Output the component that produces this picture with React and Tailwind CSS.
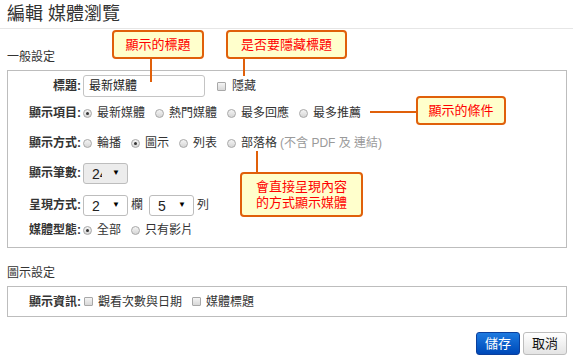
import React from "react";

const FONT = { fontFamily: '"Liberation Sans", "Noto Sans CJK TC", sans-serif' };

const Radio = ({ checked }) => (
  <span className="inline-flex items-center justify-center w-[9px] h-[9px] rounded-full border border-[#a8a8a8] bg-gradient-to-b from-[#f4f4f4] to-[#d6d6d6] shrink-0">
    {checked && <span className="w-[3px] h-[3px] rounded-full bg-[#333]" />}
  </span>
);

const Check = () => (
  <span className="inline-block w-[9px] h-[9px] border border-[#a8a8a8] rounded-[1px] bg-gradient-to-b from-[#f4f4f4] to-[#d8d8d8] shrink-0" />
);

const Options = ({ items, checked }) => (
  <div className="flex items-center">
    {items.map((t, i) => (
      <div key={t} className={`flex items-center ${i > 0 ? "ml-[10px]" : ""}`}>
        <Radio checked={i === checked} />
        <span className="ml-[5px]">{t}</span>
      </div>
    ))}
  </div>
);

const Select = ({ value, gray }) => (
  <div
    className={`flex items-center w-[45px] h-[21px] border border-[#bdbdbd] rounded-[3px] pl-[8px] pr-[7px] ${
      gray ? "bg-[#ececec]" : "bg-white"
    }`}
  >
    <span
      className={`${gray ? "w-[10px]" : "w-[14px]"} overflow-hidden whitespace-nowrap text-[14px] leading-[14px] pt-[2px] text-[#222]`}
    >
      {value}
    </span>
    <span className="ml-auto text-[8px] text-black">▼</span>
  </div>
);

const Row = ({ label, className = "", children }) => (
  <div className={`flex items-center h-[24px] ${className}`}>
    <div className="w-[73px] text-right font-bold text-[#333]">{label}:</div>
    <div className="ml-[2px] flex items-center">{children}</div>
  </div>
);

const Callout = ({ className, children }) => (
  <div
    className={`absolute flex items-center justify-center text-center border-2 border-[#e0600a] bg-[#ffffcc] rounded-[4px] text-[13px] leading-[16px] text-[#ff0000] ${className}`}
  >
    {children}
  </div>
);

export default function App() {
  return (
    <div className="relative w-[576px] h-[361px] bg-white text-[12px] text-[#333] overflow-hidden" style={FONT}>
      {/* header */}
      <div className="h-[29px] mr-[3px] border-b border-[#e6e6e6] pl-[7px] pt-[3px]">
        <h1 className="text-[18px] leading-[22px] text-[#333]">編輯 媒體瀏覽</h1>
      </div>

      <div className="px-[7px] pr-[9px]">
        <div className="mt-[20px] leading-[16px]">一般設定</div>
        <div className="mt-[5px] border border-[#bdbdbd] pt-[3px] pb-[5px]">
          <Row label="標題">
            <div className="w-[122px] h-[22px] border border-[#c4c4c4] rounded-[3px] flex items-center pl-[5px] text-[#222]">
              最新媒體
            </div>
            <div className="ml-[12px] flex items-center">
              <Check />
              <span className="ml-[6px]">隱藏</span>
            </div>
          </Row>
          <Row label="顯示項目" className="mt-[3px]">
            <Options items={["最新媒體", "熱門媒體", "最多回應", "最多推薦"]} checked={0} />
          </Row>
          <Row label="顯示方式" className="mt-[6px]">
            <Options items={["輪播", "圖示", "列表", "部落格"]} checked={1} />
            <span className="ml-[3px] text-[#9a9a9a]">(不含 PDF 及 連結)</span>
          </Row>
          <Row label="顯示筆數" className="mt-[6px]">
            <Select value="24" gray />
          </Row>
          <Row label="呈現方式" className="mt-[8px]">
            <Select value="2" />
            <span className="ml-[3px]">欄</span>
            <div className="ml-[6px]">
              <Select value="5" />
            </div>
            <span className="ml-[3px]">列</span>
          </Row>
          <Row label="媒體型態" className="mt-[1px]">
            <Options items={["全部", "只有影片"]} checked={0} />
          </Row>
        </div>

        <div className="mt-[17px] leading-[16px]">圖示設定</div>
        <div className="mt-[5px] border border-[#bdbdbd] h-[31px] flex items-center">
          <div className="w-[73px] text-right font-bold text-[#333]">顯示資訊:</div>
          <div className="ml-[3px] flex items-center">
            <Check />
            <span className="ml-[5px]">觀看次數與日期</span>
            <div className="ml-[10px] flex items-center">
              <Check />
              <span className="ml-[5px]">媒體標題</span>
            </div>
          </div>
        </div>

        <div className="mt-[15px] flex justify-end gap-[3px]">
          <button className="w-[44px] h-[23px] rounded-[3px] border border-[#0b3f9c] bg-gradient-to-b from-[#1e7ae0] to-[#0048b8] text-white text-[13px]">
            儲存
          </button>
          <button className="w-[44px] h-[23px] rounded-[3px] border border-[#bdbdbd] bg-gradient-to-b from-white to-[#e4e4e4] text-[#111] text-[13px]">
            取消
          </button>
        </div>
      </div>

      {/* callouts */}
      <div className="absolute left-[150px] top-[58px] w-[2px] h-[24px] bg-[#e0600a]" />
      <Callout className="left-[112px] top-[30px] w-[92px] h-[29px]">顯示的標題</Callout>

      <div className="absolute left-[243px] top-[58px] w-[2px] h-[18px] bg-[#e0600a]" />
      <Callout className="left-[226px] top-[30px] w-[121px] h-[29px]">是否要隱藏標題</Callout>

      <div className="absolute left-[370px] top-[111px] w-[47px] h-[2px] bg-[#e0600a]" />
      <Callout className="left-[416px] top-[96px] w-[90px] h-[29px]">顯示的條件</Callout>

      <div className="absolute left-[256px] top-[151px] w-[2px] h-[22px] bg-[#e0600a]" />
      <Callout className="left-[240px] top-[172px] w-[123px] h-[45px]">
        會直接呈現內容
        <br />
        的方式顯示媒體
      </Callout>
    </div>
  );
}
